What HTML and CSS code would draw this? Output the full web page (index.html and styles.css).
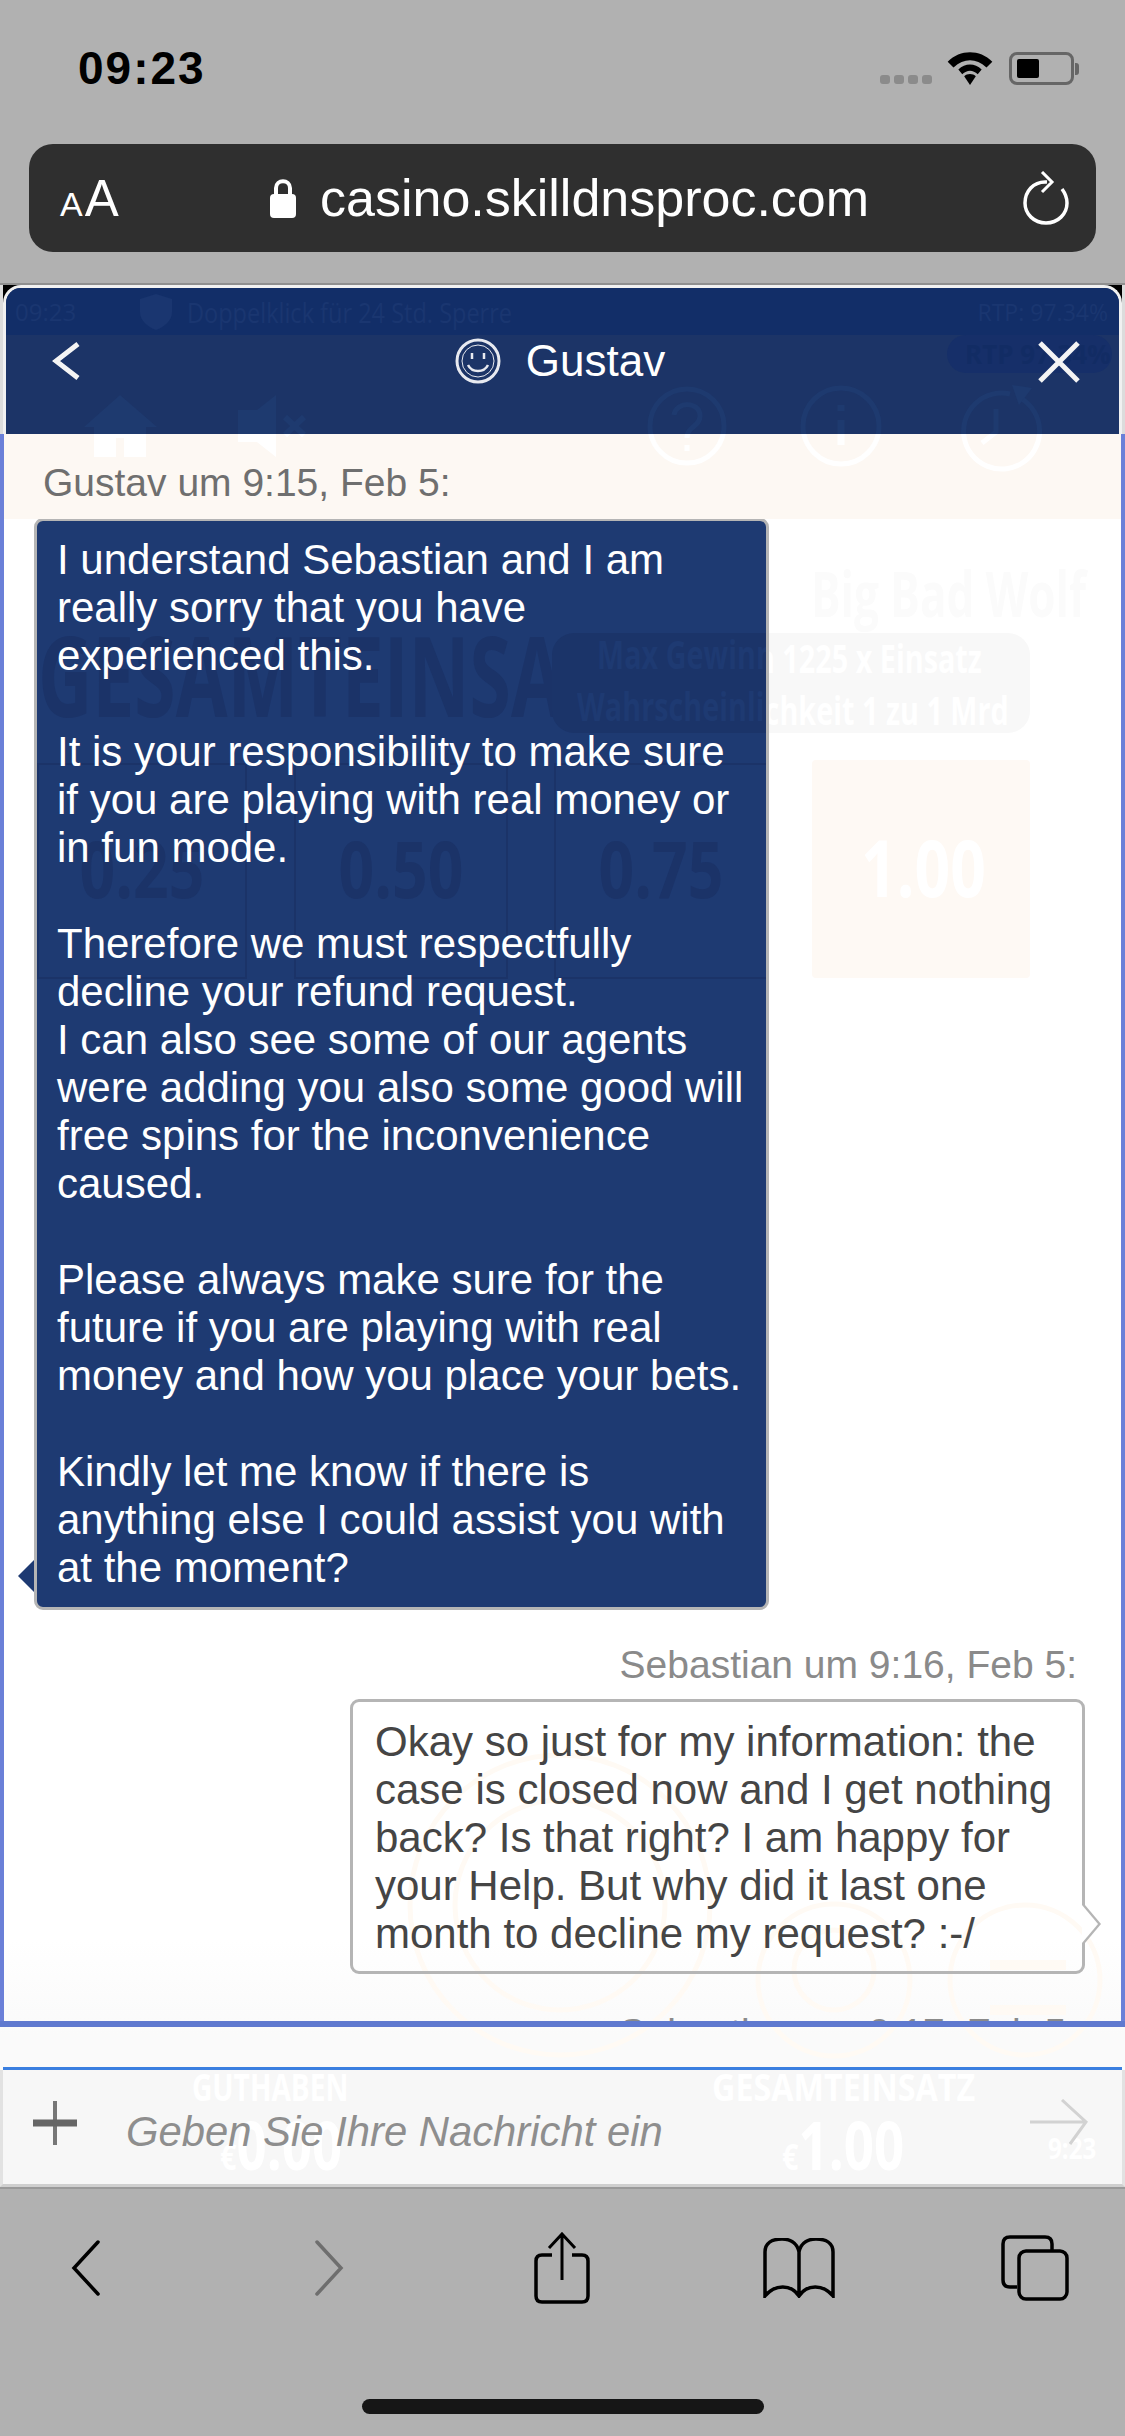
FILE: index.html
```html
<!DOCTYPE html>
<html lang="de">
<head>
    <meta charset="UTF-8">
    <meta name="viewport" content="width=device-width, initial-scale=1.0">
    <title>Gustav - Chat</title>
    <link rel="stylesheet" href="styles.css">
</head>
<body>
    <svg class="defs" width="0" height="0">
        <symbol id="gameIcons" viewBox="0 0 1125 90">
            <path d="M120 10 L157 42 H146 V72 H124 V53 H116 V72 H94 V42 H84 Z" fill="currentColor"/>
            <path d="M238 25 H257 L276 10 V72 L257 57 H238 Z" fill="currentColor"/>
            <path d="M285 32 L304 50 M304 32 L285 50" stroke="currentColor" stroke-width="6" fill="none"/>
            <circle cx="687" cy="41" r="37" stroke="currentColor" stroke-width="5" fill="none"/>
            <path d="M674 30 C676 16 700 16 700 31 C700 42 687 41 687 53 M687 60 V66" stroke="currentColor" stroke-width="5" fill="none"/>
            <circle cx="841" cy="41" r="38" stroke="currentColor" stroke-width="5" fill="none"/>
            <path d="M841 35 V60 M841 20 V26" stroke="currentColor" stroke-width="7" fill="none"/>
            <path d="M1010 9 A38 38 0 1 0 1022 14" stroke="currentColor" stroke-width="5" fill="none"/>
            <path d="M1012 0 L1032 3 L1019 20 Z" fill="currentColor"/>
            <path d="M996 24 V47 L982 58" stroke="currentColor" stroke-width="5" fill="none"/>
        </symbol>
    </svg>

    <div class="page">
        <div class="browser-top">
            <div class="status-bar">
                <span class="clock">09:23</span>
                <div class="status-icons">
                    <div class="signal"><i></i><i></i><i></i><i></i></div>
                    <svg class="wifi" viewBox="0 0 46 34">
                        <path d="M23 34 L17 25 C20 22 26 22 29 25 Z" fill="#000"/>
                        <path d="M11 18 C18 11 28 11 35 18 L31 23 C26 18 20 18 15 23 Z" fill="#000"/>
                        <path d="M0 10 C13 -3 33 -3 46 10 L40 16 C29 6 17 6 6 16 Z" fill="#000"/>
                    </svg>
                    <div class="battery"><span class="battery-level"></span></div>
                    <span class="battery-tip"></span>
                </div>
            </div>
            <div class="url-bar">
                <span class="text-size"><small>A</small>A</span>
                <div class="url">
                    <svg class="lock" viewBox="0 0 26 40">
                        <path d="M6 18 V10 C6 1 20 1 20 10 V18" stroke="#fff" stroke-width="4" fill="none"/>
                        <rect x="0" y="16" width="26" height="24" rx="4" fill="#fff"/>
                    </svg>
                    <span>casino.skilldnsproc.com</span>
                </div>
                <svg class="reload" viewBox="0 0 46 54">
                    <path d="M24 11 C10 10 2 21 2 32 C2 43 11 52 23 52 C35 52 44 43 44 32 C44 26 42 22 39 18" stroke="#fff" stroke-width="3.5" fill="none"/>
                    <path d="M19 1 L29 11 L19 21" stroke="#fff" stroke-width="3" fill="none"/>
                </svg>
            </div>
        </div>

        <div class="chat-window">
            <div class="game-behind">
                <span class="big-title">Big Bad Wolf</span>
                <div class="win-box"></div>
                <span class="win-text win-line1">Max Gewinn 1225 x Einsatz</span>
                <span class="win-text win-line2">Wahrscheinlichkeit 1 zu 1 Mrd</span>
                <div class="stake-box"></div>
                <span class="stake-value">1.00</span>
                <svg class="game-buttons" viewBox="0 0 1125 340">
                    <circle cx="560" cy="170" r="150" stroke="#fffaf4" stroke-width="5" fill="none"/>
                    <circle cx="560" cy="170" r="105" stroke="#fffaf4" stroke-width="5" fill="none"/>
                    <circle cx="834" cy="245" r="76" stroke="#fffaf4" stroke-width="5" fill="none"/>
                    <circle cx="834" cy="235" r="40" stroke="#fffaf4" stroke-width="5" fill="none"/>
                    <circle cx="1025" cy="245" r="75" stroke="#fffaf4" stroke-width="5" fill="none"/>
                    <path d="M990 230 H1066 M990 275 H1066" stroke="#fffaf4" stroke-width="10" fill="none"/>
                </svg>
            </div>

            <div class="header-wrap">
                <div class="chat-header">
                    <div class="game-strip">
                        <span class="strip-clock">09:23</span>
                        <svg class="shield" viewBox="0 0 32 36">
                            <path d="M16 0 L32 5 V18 C32 27 24 33 16 36 C8 33 0 27 0 18 V5 Z" fill="#1a3670"/>
                        </svg>
                        <span class="strip-note">Doppelklick für 24 Std. Sperre</span>
                        <span class="strip-rtp">RTP: 97.34%</span>
                    </div>
                    <div class="nav-row">
                        <svg class="ghost-icons" viewBox="0 0 1125 90"><use href="#gameIcons"/></svg>
                        <div class="rtp-pill">RTP 97.34%</div>
                        <svg class="nav-icon back" viewBox="0 0 28 40">
                            <path d="M26 3 L4 20 L26 37" stroke="#f4f4f4" stroke-width="5" fill="none"/>
                        </svg>
                        <div class="agent">
                            <svg class="face" viewBox="0 0 46 46">
                                <circle cx="23" cy="23" r="21" stroke="#e8eaf0" stroke-width="3" fill="none"/>
                                <circle cx="23" cy="23" r="16" stroke="#e8eaf0" stroke-width="1" fill="none"/>
                                <path d="M17 15 V21 M29 15 V21" stroke="#e8eaf0" stroke-width="2.5"/>
                                <path d="M13 27 C17 35 29 35 33 27" stroke="#e8eaf0" stroke-width="2.5" fill="none"/>
                            </svg>
                            <span>Gustav</span>
                        </div>
                        <svg class="nav-icon close" viewBox="0 0 42 42">
                            <path d="M2 2 L40 40 M40 2 L2 40" stroke="#f4f4f4" stroke-width="5" fill="none"/>
                        </svg>
                    </div>
                </div>
            </div>

            <div class="first-label">
                <svg class="ghost-icons strip-icons" viewBox="0 0 1125 90"><use href="#gameIcons"/></svg>
                <span>Gustav um 9:15, Feb 5:</span>
            </div>

            <div class="messages">
                <div class="bubble agent-bubble">
                    <div class="behind-bubble">
                        <span class="dark-title">GESAMTEINSATZ</span>
                        <div class="dark-win-box"></div>
                        <span class="dark-win-text dark-line1">Max Gewinn 1225 x Einsatz</span>
                        <span class="dark-win-text dark-line2">Wahrscheinlichkeit 1 zu 1 Mrd</span>
                        <div class="stake stake-a"><span>0.25</span></div>
                        <div class="stake stake-b"><span>0.50</span></div>
                        <div class="stake stake-c"><span>0.75</span></div>
                    </div>
                    <p>I understand Sebastian and I am really sorry that you have experienced this.</p>
                    <p>It is your responsibility to make sure if you are playing with real money or in fun mode.</p>
                    <p>Therefore we must respectfully decline your refund request.<br>I can also see some of our agents were adding you also some good will free spins for the inconvenience caused.</p>
                    <p>Please always make sure for the future if you are playing with real money and how you place your bets.</p>
                    <p>Kindly let me know if there is anything else I could assist you with at the moment?</p>
                </div>

                <div class="msg-label">Sebastian um 9:16, Feb 5:</div>
                <div class="bubble user-bubble">
                    <p>Okay so just for my information: the case is closed now and I get nothing back? Is that right? I am happy for your Help. But why did it last one month to decline my request? :-/</p>
                </div>

                <div class="msg-label next-label">Sebastian um 9:17, Feb 5:</div>
            </div>

            <div class="messages-end"></div>
            <div class="gap-row"></div>

            <div class="input-row">
                <span class="foot-title foot-guthaben">GUTHABEN</span>
                <span class="foot-value foot-balance"><small>€</small>0.00</span>
                <span class="foot-title foot-stake">GESAMTEINSATZ</span>
                <span class="foot-value foot-total"><small>€</small>1.00</span>
                <span class="foot-clock">9:23</span>
                <svg class="plus" viewBox="0 0 44 44">
                    <path d="M22 0 V44" stroke="#777" stroke-width="4" fill="none"/>
                    <path d="M0 22 H44" stroke="#666" stroke-width="7" fill="none"/>
                </svg>
                <span class="placeholder">Geben Sie Ihre Nachricht ein</span>
                <svg class="send" viewBox="0 0 58 46">
                    <path d="M0 23 H56 M32 1 L56 23 L40 45" stroke="#d2d2d2" stroke-width="3" fill="none"/>
                </svg>
            </div>
        </div>

        <div class="browser-bottom">
            <div class="toolbar">
                <svg class="tool chevron" viewBox="0 0 30 56">
                    <path d="M27 2 L3 28 L27 54" stroke="#000" stroke-width="3.5" fill="none" stroke-linecap="round"/>
                </svg>
                <svg class="tool chevron" viewBox="0 0 30 56">
                    <path d="M3 2 L27 28 L3 54" stroke="#6e6e6e" stroke-width="3.5" fill="none" stroke-linecap="round"/>
                </svg>
                <svg class="tool share" viewBox="0 0 56 72">
                    <path d="M18 23 H8 Q2 23 2 29 V64 Q2 70 8 70 H48 Q54 70 54 64 V29 Q54 23 48 23 H38" stroke="#000" stroke-width="3.5" fill="none"/>
                    <path d="M28 48 V3 M15 16 L28 2 L41 16" stroke="#000" stroke-width="3" fill="none"/>
                </svg>
                <svg class="tool book" viewBox="0 0 72 60">
                    <path d="M36 14 C34 4 26 1 19 1 C9 1 2 5 2 14 V58 C12 46 28 46 36 58 C44 46 60 46 70 58 V14 C70 5 63 1 53 1 C46 1 38 4 36 14 V58" stroke="#000" stroke-width="3.5" fill="none"/>
                </svg>
                <svg class="tool tabs" viewBox="0 0 68 66">
                    <path d="M16 52 H9 Q2 52 2 45 V9 Q2 2 9 2 H44 Q51 2 51 9 V15" stroke="#000" stroke-width="3.5" fill="none"/>
                    <rect x="18" y="16" width="48" height="48" rx="7" stroke="#000" stroke-width="3.5" fill="none"/>
                </svg>
            </div>
            <div class="home-bar"></div>
        </div>
    </div>
</body>
</html>
```

FILE: styles.css
```css
* {
    box-sizing: border-box;
}
body {
    margin: 0;
    font-family: "Liberation Sans", Arial, sans-serif;
    background-color: #b1b1b1;
}
p {
    margin: 0;
}
.defs {
    position: absolute;
}
.page {
    display: flex;
    flex-direction: column;
    height: 2436px;
    overflow: hidden;
}

/* browser chrome, top */
.browser-top {
    height: 285px;
    flex-shrink: 0;
    padding: 0 29px;
    border-bottom: 2px solid #8f8f8f;
    background-color: #b1b1b1;
}
.status-bar {
    display: flex;
    justify-content: space-between;
    align-items: center;
    height: 144px;
    padding: 0 17px 8px 49px;
}
.clock {
    font-size: 46px;
    font-weight: bold;
    letter-spacing: 2px;
    color: #000;
}
.status-icons {
    display: flex;
    align-items: flex-end;
}
.signal {
    display: flex;
    gap: 4px;
    margin-right: 15px;
    margin-bottom: 1px;
}
.signal i {
    width: 10px;
    height: 9px;
    border-radius: 3px;
    background-color: #8b8b8b;
}
.wifi {
    width: 46px;
    height: 33px;
    margin-right: 16px;
}
.battery {
    width: 65px;
    height: 33px;
    padding: 4px 5px;
    border: 3px solid #666;
    border-radius: 8px;
}
.battery-level {
    display: block;
    width: 22px;
    height: 100%;
    border-radius: 2px;
    background-color: #000;
}
.battery-tip {
    width: 4px;
    height: 12px;
    margin: 0 0 10px 1px;
    border-radius: 0 3px 3px 0;
    background-color: #666;
}
.url-bar {
    display: flex;
    align-items: center;
    height: 108px;
    padding: 0 27px 0 31px;
    border-radius: 24px;
    background-color: #2f2f2f;
    color: #fff;
}
.text-size {
    width: 210px;
    font-size: 51px;
}
.text-size small {
    font-size: 34px;
    margin-right: 2px;
}
.url {
    display: flex;
    align-items: center;
    gap: 24px;
    flex: 1;
    font-size: 52px;
}
.lock {
    width: 26px;
    height: 40px;
}
.reload {
    width: 46px;
    height: 54px;
}

/* chat window */
.chat-window {
    position: relative;
    display: flex;
    flex-direction: column;
    flex: 1;
    background: linear-gradient(#fff 87%, #fafafa 92%);
    overflow: hidden;
}
.game-behind {
    position: absolute;
    inset: 0;
}
.big-title {
    position: absolute;
    left: 811px;
    top: 266px;
    font-family: "Open Sans", sans-serif;
    font-size: 62px;
    font-weight: bold;
    white-space: nowrap;
    color: #fbfbfb;
    transform: scaleX(.71);
    transform-origin: left top;
}
.win-box {
    position: absolute;
    left: 552px;
    top: 348px;
    width: 478px;
    height: 100px;
    border-radius: 22px;
    background-color: #f8f8f8;
}
.win-text {
    position: absolute;
    left: 577px;
    font-family: "Open Sans", sans-serif;
    font-size: 40px;
    font-weight: bold;
    white-space: nowrap;
    color: #fff;
    transform: scaleX(.72);
    transform-origin: left top;
}
.win-line1 {
    left: 597px;
    top: 345px;
}
.win-line2 {
    top: 397px;
}
.stake-box {
    position: absolute;
    left: 812px;
    top: 475px;
    width: 218px;
    height: 218px;
    border-radius: 4px;
    background-color: #fef9f4;
}
.stake-value {
    position: absolute;
    left: 861px;
    top: 532px;
    font-family: "Open Sans", sans-serif;
    font-size: 78px;
    font-weight: bold;
    line-height: 100px;
    color: #fff;
    transform: scaleX(.8);
    transform-origin: left top;
}
.game-buttons {
    position: absolute;
    left: 0;
    top: 1450px;
    width: 1125px;
    height: 340px;
}
.header-wrap {
    position: relative;
    margin: 0 3px;
    background-color: #000;
}
.chat-window::before {
    content: "";
    position: absolute;
    left: 0;
    right: 0;
    top: 0;
    height: 149px;
    background-color: #dcdcdc;
}
.chat-header {
    height: 149px;
    border: 3px solid #f1f1f1;
    border-bottom: none;
    border-radius: 18px 18px 0 0;
    background-color: #1c3467;
    overflow: hidden;
}
.game-strip {
    position: relative;
    display: flex;
    align-items: center;
    height: 47px;
    padding: 0 11px 0 9px;
    background-color: #122e68;
    font-family: "Open Sans", sans-serif;
    font-size: 28px;
    color: #1a3670;
}
.strip-clock {
    width: 125px;
    font-size: 24px;
}
.shield {
    width: 32px;
    height: 36px;
    margin-right: 15px;
}
.strip-note {
    display: block;
    flex: 1;
    white-space: nowrap;
    transform: scaleX(.84);
    transform-origin: left center;
}
.strip-rtp {
    font-size: 24px;
    white-space: nowrap;
    transform: scaleX(.96);
    transform-origin: right center;
}
.nav-row {
    position: relative;
    display: flex;
    justify-content: space-between;
    align-items: flex-start;
    height: 99px;
    padding: 2px 39px 0 46px;
    overflow: hidden;
}
.ghost-icons {
    position: absolute;
    left: -6px;
    top: 50px;
    width: 1125px;
    height: 90px;
    color: #1e3a6f;
}
.rtp-pill {
    position: absolute;
    left: 941px;
    top: 0;
    width: 165px;
    height: 38px;
    padding-left: 18px;
    border-radius: 19px;
    background-color: #162f69;
    font-family: "Open Sans", sans-serif;
    font-size: 26px;
    font-weight: bold;
    line-height: 38px;
    white-space: nowrap;
    color: #122c64;
}
.nav-icon {
    position: relative;
    margin-top: 4px;
}
.back {
    width: 28px;
    height: 40px;
}
.close {
    width: 42px;
    height: 42px;
}
.agent {
    position: relative;
    display: flex;
    align-items: center;
    gap: 25px;
    margin-left: 2px;
    font-size: 44px;
    line-height: 48px;
    color: #fff;
}
.face {
    width: 46px;
    height: 46px;
}
.first-label {
    position: relative;
    height: 85px;
    padding: 27px 0 0 39px;
    border-left: 4px solid #6b80d8;
    border-right: 4px solid #6b80d8;
    background-color: #fdf8f3;
    font-size: 39px;
    line-height: 44px;
    color: #6f6f6f;
    overflow: hidden;
}
.first-label span {
    position: relative;
}
.ghost-icons.strip-icons {
    left: -4px;
    top: -49px;
    color: #fff;
}
.messages {
    position: relative;
    flex: 1;
    min-height: 0;
    padding: 0 36px 0 30px;
    border-left: 4px solid #6b80d8;
    border-right: 4px solid #6b80d8;
    overflow: hidden;
}
.bubble {
    position: relative;
    border: 3px solid #b5b5b5;
    border-radius: 9px;
    font-size: 42px;
    line-height: 48px;
}
.bubble p {
    position: relative;
}
.agent-bubble {
    width: 735px;
    margin-top: -1px;
    padding: 15px 21px 15px 20px;
    background-color: #1e3a72;
    color: #fff;
}
.agent-bubble p + p {
    margin-top: 48px;
}
.agent-bubble::before {
    content: "";
    position: absolute;
    left: -19px;
    bottom: 15px;
    border-top: 16px solid transparent;
    border-bottom: 16px solid transparent;
    border-right: 16px solid #1e3a72;
}
.user-bubble {
    width: 735px;
    margin-left: auto;
    padding: 16px 10px 13px 22px;
    color: #454545;
}
.user-bubble::before,
.user-bubble::after {
    content: "";
    position: absolute;
    top: 203px;
    border-top: 19px solid transparent;
    border-bottom: 19px solid transparent;
}
.user-bubble::before {
    right: -19px;
    border-left: 16px solid #b5b5b5;
}
.user-bubble::after {
    right: -16px;
    border-left: 16px solid #fff;
}
.behind-bubble {
    position: absolute;
    inset: 0;
    border-radius: 6px;
    overflow: hidden;
}
.dark-title {
    position: absolute;
    left: 1px;
    top: 83px;
    font-family: "Open Sans", sans-serif;
    font-size: 112px;
    font-weight: bold;
    line-height: 140px;
    white-space: nowrap;
    color: #1b3368;
    transform: scaleX(.67);
    transform-origin: left top;
}
.dark-win-box {
    position: absolute;
    left: 515px;
    top: 112px;
    width: 478px;
    height: 100px;
    border-radius: 22px;
    background-color: #1b3469;
}
.dark-win-text {
    position: absolute;
    font-family: "Open Sans", sans-serif;
    font-size: 40px;
    font-weight: bold;
    white-space: nowrap;
    color: #1e3a72;
    transform: scaleX(.72);
    transform-origin: left top;
}
.dark-line1 {
    left: 560px;
    top: 109px;
}
.dark-line2 {
    left: 540px;
    top: 161px;
}
.stake {
    position: absolute;
    top: 242px;
    width: 214px;
    height: 216px;
    padding-top: 53px;
    border: 2px solid #1b3368;
    font-family: "Open Sans", sans-serif;
    font-size: 78px;
    font-weight: bold;
    line-height: 100px;
    text-align: center;
    color: #1b3368;
}
.stake span {
    display: block;
    transform: scaleX(.8);
}
.stake-a {
    left: 0;
    width: 210px;
}
.stake-b {
    left: 257px;
}
.stake-c {
    left: 517px;
}
.msg-label {
    margin-top: 33px;
    margin-bottom: 12px;
    padding-right: 8px;
    font-size: 39px;
    line-height: 44px;
    text-align: right;
    color: #8a8a8a;
}
.next-label {
    margin-top: 37px;
}
.messages-end {
    position: relative;
    flex-shrink: 0;
    height: 6px;
    background-color: #5f79cf;
}
.gap-row {
    position: relative;
    flex-shrink: 0;
    height: 43px;
    border-bottom: 3px solid #3a7fe0;
    margin: 0 3px;
}
.input-row {
    position: relative;
    display: flex;
    align-items: center;
    flex-shrink: 0;
    height: 117px;
    padding: 0 34px 0 30px;
    border-left: 3px solid #e2e2e2;
    border-right: 3px solid #e2e2e2;
    border-bottom: 3px solid #cfcfcf;
    background-color: rgba(246, 246, 246, .8);
}
.foot-title,
.foot-value,
.foot-clock {
    position: absolute;
    font-family: "Open Sans", sans-serif;
    font-weight: bold;
    white-space: nowrap;
    color: #fff;
    transform-origin: left top;
}
.foot-title {
    top: -9px;
    font-size: 38px;
    line-height: 50px;
}
.foot-value {
    top: 34px;
    font-size: 66px;
    line-height: 80px;
    transform: scaleX(.8);
}
.foot-value small {
    font-size: 36px;
}
.foot-guthaben {
    left: 189px;
    transform: scaleX(.74);
}
.foot-stake {
    left: 709px;
    transform: scaleX(.85);
}
.foot-balance {
    left: 217px;
}
.foot-total {
    left: 779px;
}
.foot-clock {
    left: 1045px;
    top: 58px;
    font-size: 28px;
    line-height: 40px;
    transform: scaleX(.86);
}
.plus {
    position: relative;
    width: 44px;
    height: 44px;
    margin-top: -8px;
}
.placeholder {
    position: relative;
    flex: 1;
    margin: 10px 0 0 49px;
    font-size: 41.8px;
    font-style: italic;
    color: #8e8e8e;
}
.send {
    position: relative;
    width: 58px;
    height: 46px;
    margin-top: -10px;
}

/* browser chrome, bottom */
.browser-bottom {
    flex-shrink: 0;
    height: 249px;
    padding-top: 43px;
    border-top: 2px solid #9a9a9a;
}
.toolbar {
    display: grid;
    grid-template-columns: 248px 238px 228px 246px 226px;
    align-items: center;
    height: 72px;
    margin-left: -38px;
}
.tool {
    justify-self: center;
}
.chevron {
    width: 30px;
    height: 56px;
}
.share {
    width: 56px;
    height: 72px;
}
.book {
    width: 72px;
    height: 60px;
}
.tabs {
    width: 68px;
    height: 66px;
}
.home-bar {
    width: 402px;
    height: 15px;
    margin: 95px auto 0;
    border-radius: 8px;
    background-color: #161616;
}
```
